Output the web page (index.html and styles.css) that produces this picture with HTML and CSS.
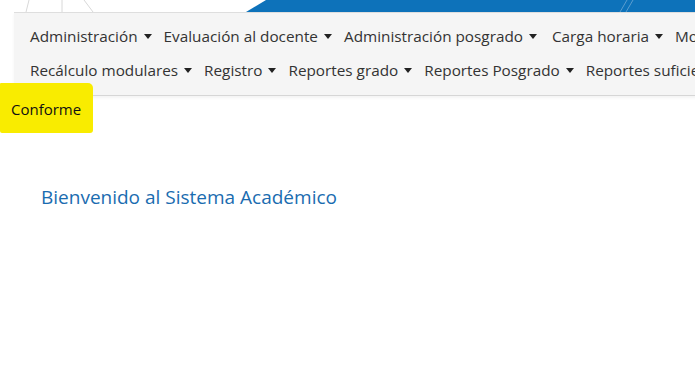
FILE: index.html
```html
<!DOCTYPE html>
<html>
<head>
    <meta charset="utf-8">
    <link rel="stylesheet" href="styles.css">
</head>
<body>
    <div class="banner">
        <svg width="695" height="12" viewBox="0 0 695 12">
            <line x1="29" y1="0" x2="26" y2="12" stroke="#d8d8d8" stroke-width="1"/>
            <line x1="62" y1="0" x2="62" y2="12" stroke="#d8d8d8" stroke-width="1"/>
            <line x1="84" y1="0" x2="93" y2="12" stroke="#d8d8d8" stroke-width="1"/>
            <polygon points="246,12 266,0 695,0 695,12" fill="#0d72ba"/>
            <line x1="620" y1="12" x2="627" y2="0" stroke="#5c9ed0" stroke-width="1"/>
            <line x1="626" y1="12" x2="633" y2="0" stroke="#5c9ed0" stroke-width="1"/>
        </svg>
    </div>

    <nav class="navbar">
        <ul class="menu">
            <li class="dropdown">Administración</li>
            <li class="dropdown">Evaluación al docente</li>
            <li class="dropdown">Administración posgrado</li>
            <li class="dropdown">Carga horaria</li>
            <li class="dropdown">Modulares</li>
            <li class="dropdown">Recálculo modulares</li>
            <li class="dropdown">Registro</li>
            <li class="dropdown">Reportes grado</li>
            <li class="dropdown">Reportes Posgrado</li>
            <li class="dropdown">Reportes suficiencia</li>
        </ul>
    </nav>

    <div class="status">
        <span class="highlight"></span>
        <span class="status-text">Conforme</span>
    </div>

    <main class="content">
        <h1 class="welcome">Bienvenido al Sistema Académico</h1>
    </main>
</body>
</html>
```

FILE: styles.css
```css
html, body {
    margin: 0;
    padding: 0;
    width: 695px;
    height: 391px;
    overflow: hidden;
    background: #fff;
    font-family: "Open Sans", "Noto Sans", sans-serif;
    color: #333;
}

.banner {
    height: 12px;
    line-height: 0;
}

.navbar {
    margin-left: 14px;
    width: 900px;
    background-color: #f5f5f5;
    border-top: 1px solid #dedede;
    border-bottom: 1px solid #d6d6d6;
    box-shadow: 0 2px 3px rgba(0, 0, 0, 0.05);
    padding: 6px 0 8px 16px;
}

.menu {
    list-style: none;
    margin: 0;
    padding: 0;
    display: flex;
    flex-wrap: wrap;
    width: 760px;
}

.menu li {
    font-size: 15.3px;
    line-height: 34px;
    margin-right: 12px;
    white-space: nowrap;
}

.menu li:nth-child(4) {
    margin-left: 3px;
}

.dropdown::after {
    content: "";
    display: inline-block;
    margin-left: 6px;
    vertical-align: 3px;
    border-top: 5px solid #222;
    border-left: 4.5px solid transparent;
    border-right: 4.5px solid transparent;
}

.status {
    position: relative;
    height: 36px;
    padding-left: 11px;
}

.highlight {
    position: absolute;
    left: 0;
    top: -13px;
    width: 93px;
    height: 50px;
    background: #f9ec00;
    border-radius: 1px 5px 3px 2px;
}

.status-text {
    position: relative;
    font-size: 15px;
    line-height: 26px;
    color: #111;
}

.content {
    padding: 52px 0 0 41px;
}

.welcome {
    margin: 0;
    font-size: 19px;
    font-weight: normal;
    color: #1a6cb0;
}
```
